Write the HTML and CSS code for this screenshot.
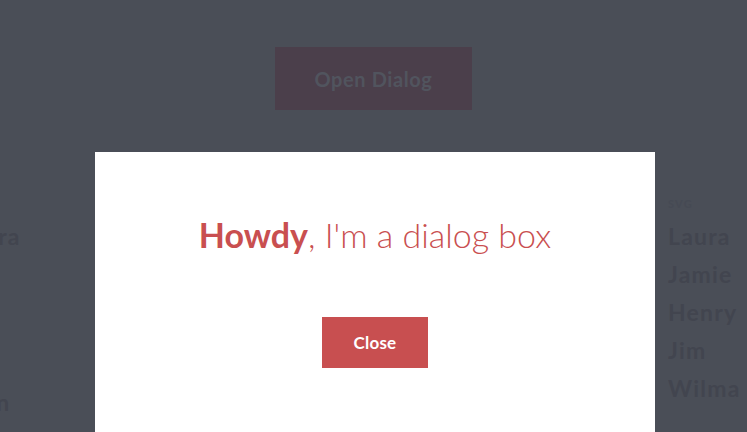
FILE: index.html
```html
<!DOCTYPE html>
<html>
<head>
<meta charset="utf-8">
<link rel="stylesheet" href="styles.css">
</head>
<body>
<div class="page">
  <button class="open-btn">Open Dialog</button>
  <div class="lists">
    <ul class="col col-left">
      <li>Laura</li>
      <li class="gap">Megan</li>
    </ul>
    <div class="col col-right">
      <div class="label">SVG</div>
      <ul class="names">
        <li>Laura</li>
        <li>Jamie</li>
        <li>Henry</li>
        <li>Jim</li>
        <li>Wilma</li>
      </ul>
    </div>
  </div>
</div>
<div class="dialog">
  <h1 class="title"><strong>Howdy</strong>, I'm a dialog box</h1>
  <button class="close-btn">Close</button>
</div>
</body>
</html>
```

FILE: styles.css
```css
html, body {
  margin: 0;
  padding: 0;
  height: 100%;
  overflow: hidden;
}
body {
  background: #4a4e57;
  font-family: "Lato", "Open Sans", sans-serif;
}
.page {
  padding-top: 47px;
}
.open-btn {
  display: block;
  margin: 0 auto;
  width: 197px;
  height: 63px;
  border: 0;
  background: #4b3f4b;
  color: #51545e;
  font-family: "Lato", sans-serif;
  font-weight: 700;
  font-size: 20px;
  letter-spacing: 0.6px;
  padding: 0;
}
.lists {
  display: flex;
  justify-content: space-between;
  margin-top: 84px;
}
ul {
  list-style: none;
  margin: 0;
  padding: 0;
}
.col li {
  font-size: 23px;
  font-weight: 700;
  letter-spacing: 1.2px;
  color: #42454f;
  height: 38px;
  line-height: 38px;
}
.col-left {
  margin-left: -42px;
  padding-top: 23px;
}
.col-left .gap {
  margin-top: 128px;
  margin-left: -24px;
}
.col-right {
  width: 79px;
}
.label {
  font-size: 11px;
  font-weight: 700;
  letter-spacing: 1.2px;
  color: #464a54;
  height: 23px;
  line-height: 19px;
}
.dialog {
  position: fixed;
  left: 95px;
  top: 152px;
  width: 560px;
  bottom: 0;
  background: #ffffff;
  display: flex;
  flex-direction: column;
  align-items: center;
}
.title {
  margin: 63px 0 0;
  font-family: "Lato", sans-serif;
  font-weight: 300;
  font-size: 34px;
  line-height: 40px;
  color: #c94f50;
}
.title strong {
  font-weight: 700;
}
.close-btn {
  margin-top: 62px;
  width: 106px;
  height: 51px;
  border: 0;
  padding: 0;
  background: #c84f50;
  color: #ffffff;
  font-family: "Lato", sans-serif;
  font-weight: 700;
  font-size: 17px;
  letter-spacing: 0.2px;
}
```
